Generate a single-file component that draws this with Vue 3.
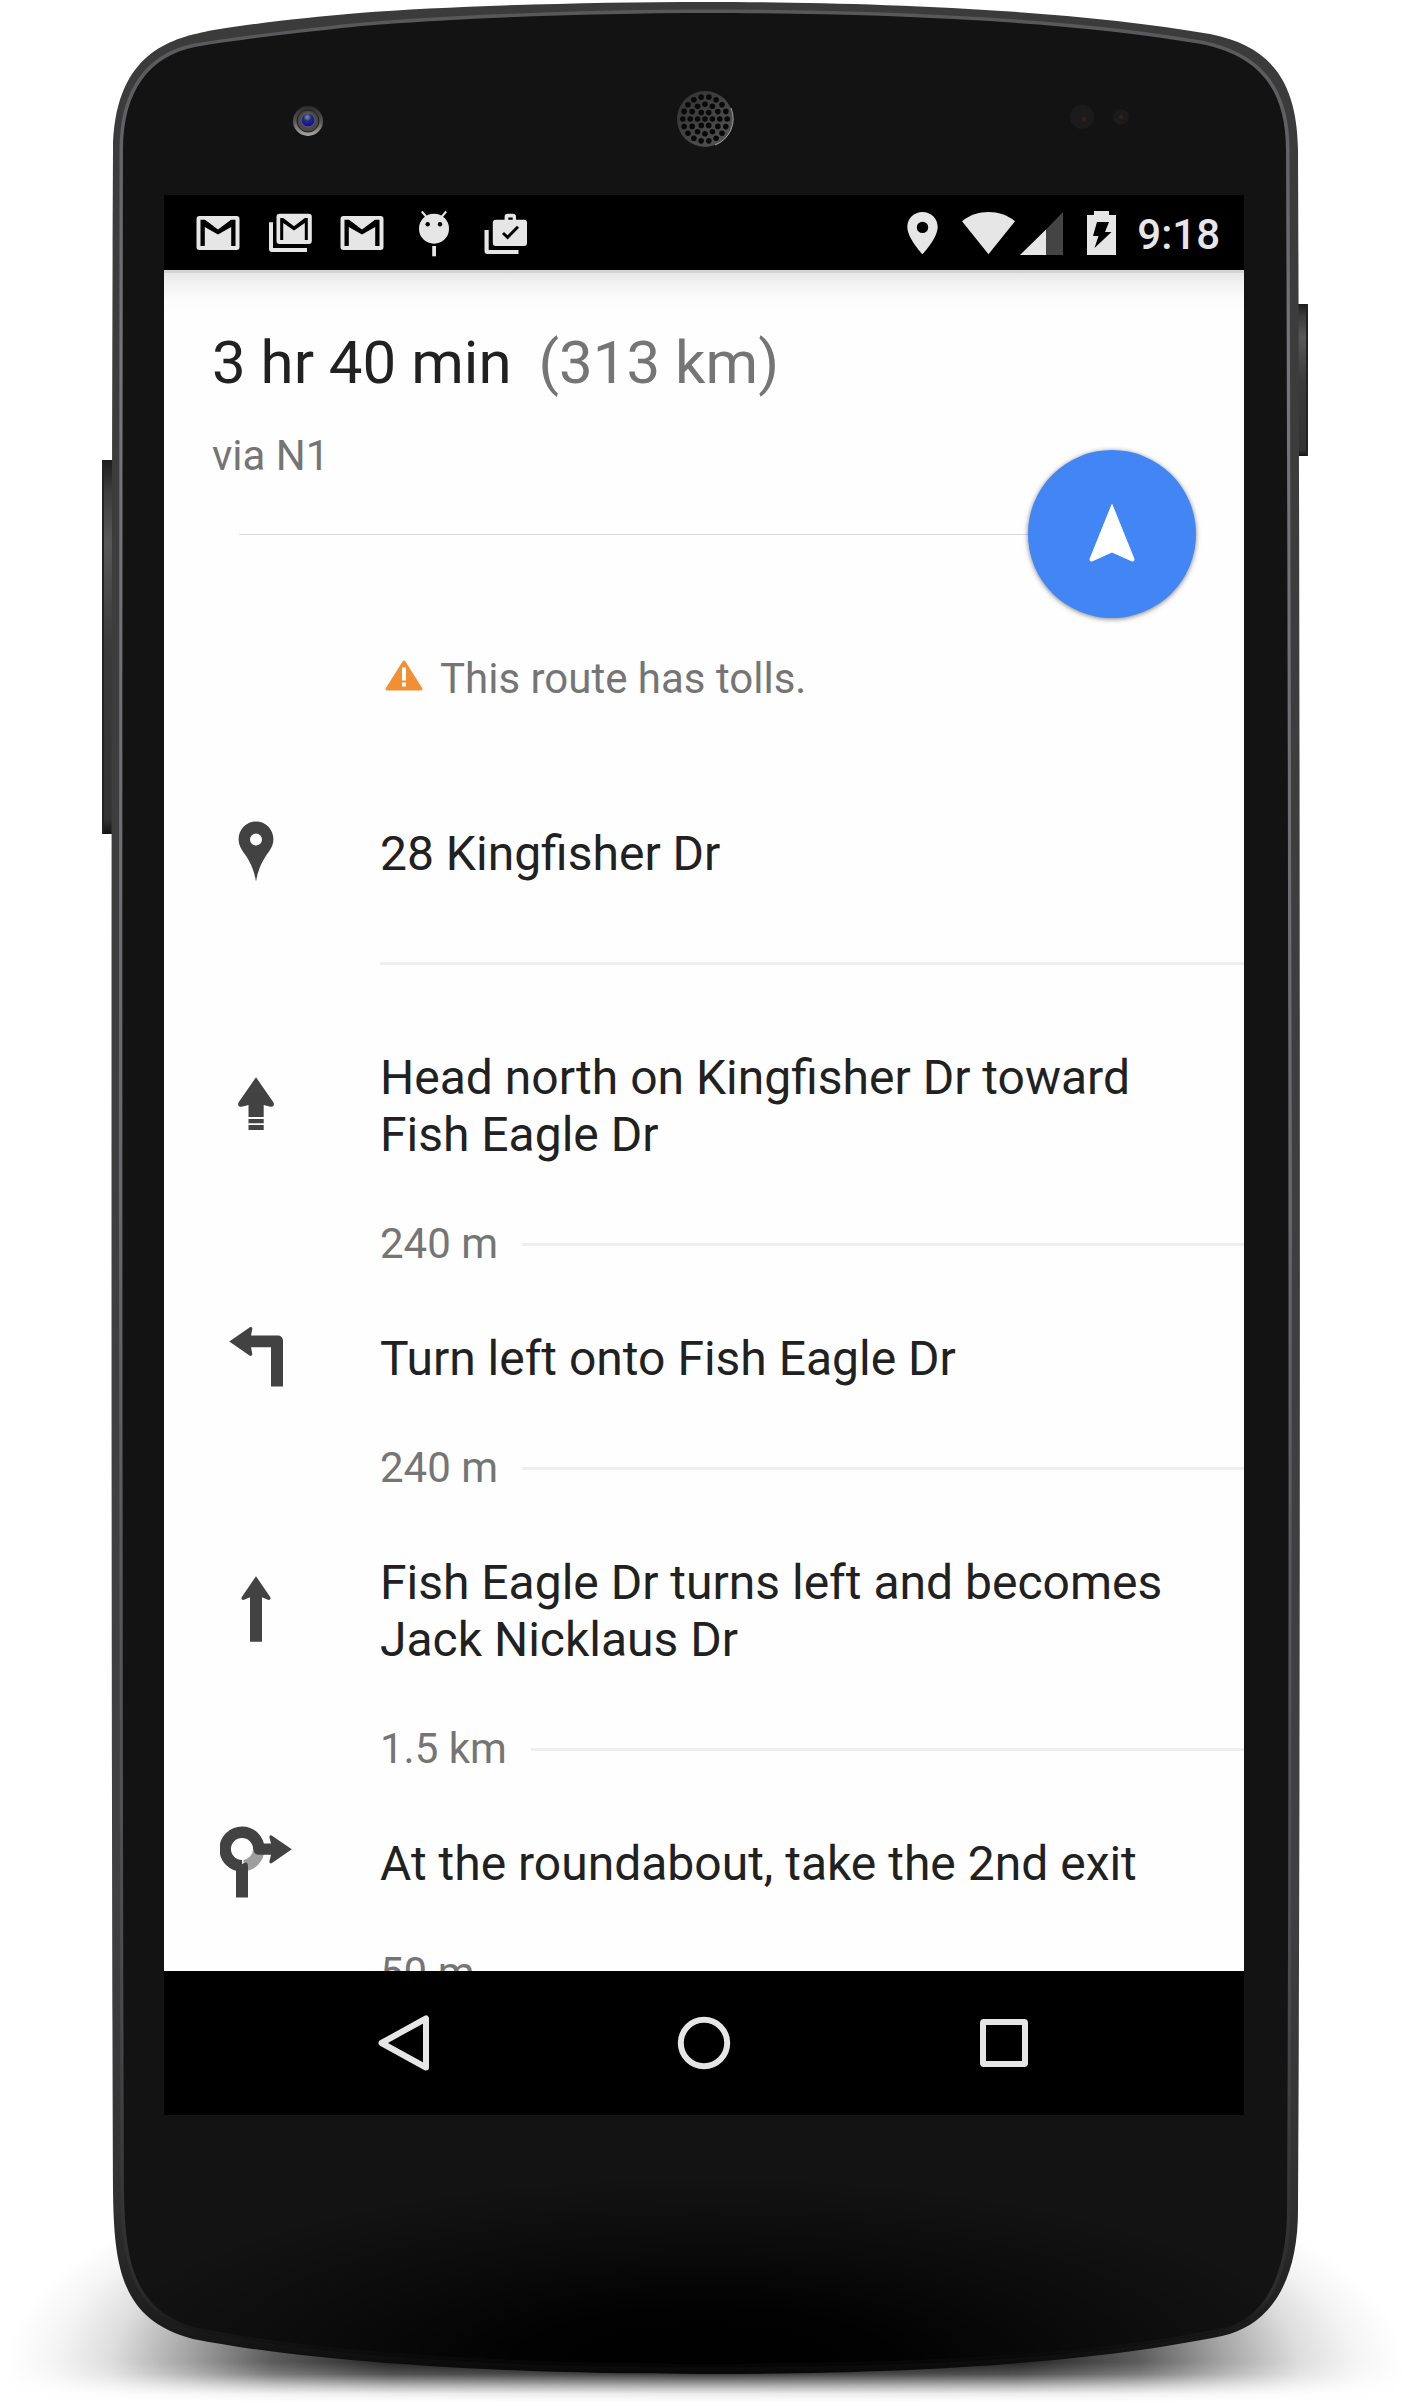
<script setup>
const summary = { duration: '3 hr 40 min', distance: '(313 km)', via: 'via N1' }

const steps = [
  { icon: 'pin', text: '28 Kingfisher Dr', distance: '' },
  { icon: 'depart', text: 'Head north on Kingfisher Dr toward Fish Eagle Dr', distance: '240 m' },
  { icon: 'left', text: 'Turn left onto Fish Eagle Dr', distance: '240 m' },
  { icon: 'straight', text: 'Fish Eagle Dr turns left and becomes Jack Nicklaus Dr', distance: '1.5 km' },
  { icon: 'roundabout', text: 'At the roundabout, take the 2nd exit', distance: '50 m' }
]

// Earpiece holes: a centre hole and three rings of 6, 12 and 18.
const holes = [{ x: 705, y: 119 }]
for (let ring = 1; ring <= 3; ring++) {
  for (let i = 0; i < ring * 6; i++) {
    const a = (i * Math.PI * 2) / (ring * 6)
    holes.push({ x: 705 + Math.cos(a) * ring * 7.4, y: 119 + Math.sin(a) * ring * 7.4 })
  }
}
</script>

<template>
  <main class="device">
    <svg class="frame" viewBox="0 0 1410 2406" preserveAspectRatio="none" aria-hidden="true">
      <defs>
        <linearGradient id="rim" x1="0" y1="0" x2="0" y2="1">
          <stop offset="0" stop-color="#3b3b3c" />
          <stop offset="0.8" stop-color="#404042" />
          <stop offset="0.93" stop-color="#303031" />
          <stop offset="0.98" stop-color="#1c1c1c" />
          <stop offset="1" stop-color="#080808" />
        </linearGradient>
        <linearGradient id="shine" x1="0" y1="0" x2="0" y2="1">
          <stop offset="0" stop-color="#58585b" />
          <stop offset="0.15" stop-color="#75757b" />
          <stop offset="0.5" stop-color="#68686d" />
          <stop offset="0.85" stop-color="#4a4a4d" />
          <stop offset="0.97" stop-color="#2b2b2b" />
          <stop offset="1" stop-color="#060606" />
        </linearGradient>
        <radialGradient id="shade" gradientUnits="userSpaceOnUse" cx="0" cy="0" r="1" gradientTransform="translate(705 2365) scale(620 190)">
          <stop offset="0" stop-color="#000" />
          <stop offset="0.3" stop-color="#000" stop-opacity="0.9" />
          <stop offset="0.65" stop-color="#000" stop-opacity="0.4" />
          <stop offset="1" stop-color="#000" stop-opacity="0" />
        </radialGradient>
        <radialGradient id="ground" gradientUnits="userSpaceOnUse" cx="0" cy="0" r="1" gradientTransform="translate(705 2370) scale(700 250)">
          <stop offset="0" stop-color="#000" stop-opacity="0.95" />
          <stop offset="0.45" stop-color="#000" stop-opacity="0.85" />
          <stop offset="0.62" stop-color="#000" stop-opacity="0.64" />
          <stop offset="0.74" stop-color="#000" stop-opacity="0.36" />
          <stop offset="0.85" stop-color="#000" stop-opacity="0.13" />
          <stop offset="0.93" stop-color="#000" stop-opacity="0.04" />
          <stop offset="1" stop-color="#000" stop-opacity="0" />
        </radialGradient>
        <linearGradient id="fall" gradientUnits="userSpaceOnUse" x1="0" y1="2362" x2="0" y2="2402">
          <stop offset="0" stop-color="#fff" />
          <stop offset="0.3" stop-color="#ccc" />
          <stop offset="0.6" stop-color="#555" />
          <stop offset="0.8" stop-color="#141414" />
          <stop offset="1" stop-color="#000" />
        </linearGradient>
        <mask id="fallMask" maskUnits="userSpaceOnUse" x="0" y="2100" width="1410" height="306">
          <rect y="2100" width="1410" height="306" fill="url(#fall)" />
        </mask>
        <linearGradient id="key" x1="0" y1="0" x2="0" y2="1">
          <stop offset="0" stop-color="#1c1c1c" />
          <stop offset="0.08" stop-color="#3c3c3c" />
          <stop offset="0.22" stop-color="#585858" />
          <stop offset="0.5" stop-color="#3a3a3a" />
          <stop offset="0.96" stop-color="#333" />
          <stop offset="1" stop-color="#141414" />
        </linearGradient>
        <linearGradient id="ringShade" x1="0" y1="0" x2="0" y2="1">
          <stop offset="0" stop-color="#2b2b2b" />
          <stop offset="0.5" stop-color="#555" />
          <stop offset="1" stop-color="#a8a8a8" />
        </linearGradient>
        <radialGradient id="lens" cx="0.45" cy="0.3" r="0.7">
          <stop offset="0" stop-color="#8695a5" />
          <stop offset="0.4" stop-color="#26306a" />
          <stop offset="0.75" stop-color="#1212b4" />
          <stop offset="1" stop-color="#10104a" />
        </radialGradient>
        <linearGradient id="mesh" x1="0" y1="0" x2="1" y2="1">
          <stop offset="0" stop-color="#303030" />
          <stop offset="1" stop-color="#565656" />
        </linearGradient>
      </defs>

      <rect y="2100" width="1410" height="306" fill="url(#ground)" mask="url(#fallMask)" />
      <rect x="102" y="460" width="14" height="374" rx="1" fill="url(#key)" />
      <rect x="102" y="460" width="2" height="374" fill="#222" />
      <rect x="1294" y="304" width="14" height="152" rx="1" fill="url(#key)" />
      <rect x="1306" y="304" width="2" height="152" fill="#222" />

      <path
        fill="url(#rim)"
        d="M705 2C590 2 450 6 359 13C300 18 240 25 204 32C165 40 114 58 113 150C111 600 111 1700 113 2190C114 2270 122 2320 193 2339C300 2360 480 2374 705 2374C930 2374 1100 2361 1222 2336C1275 2324 1298 2275 1298 2210C1301 1700 1300 600 1298 150C1297 80 1270 46 1210 34C1060 8 850 2 705 2Z"
      />
      <path
        class="panel"
        fill="#131313"
        stroke="url(#shine)"
        stroke-width="7"
        d="M705 13C590 13 430 19 342 28C280 35 235 40 195 47C150 56 123 90 123 150C122 600 122 1700 124 2190C125 2262 134 2312 198 2328C310 2350 480 2364 705 2364C930 2364 1100 2354 1227 2327C1270 2315 1287 2265 1287 2210C1290 1700 1288 600 1286 150C1286 85 1255 55 1201 44C1060 19 850 13 705 13Z"
      />
      <path
        fill="url(#shade)"
        d="M124 2115V2190C125 2262 134 2312 198 2328C310 2350 480 2364 705 2364C930 2364 1100 2354 1227 2327C1270 2315 1287 2265 1287 2210V2115Z"
      />

      <circle cx="308" cy="121" r="15" fill="url(#ringShade)" />
      <circle cx="308" cy="121" r="11" fill="#4a4745" stroke="#1c1c1c" stroke-width="1" />
      <circle cx="308" cy="120" r="7" fill="url(#lens)" stroke="#69645f" stroke-width="1" />

      <circle cx="705" cy="119" r="28" fill="url(#mesh)" />
      <path d="M715 145A28 28 0 0 0 731 108" fill="none" stroke="#a5a5a5" stroke-width="1" />
      <circle v-for="(h, i) in holes" :key="i" :cx="h.x" :cy="h.y" r="2.8" fill="#080808" />

      <circle cx="1082" cy="117" r="12" fill="#1b1b1b" />
      <circle cx="1084" cy="119" r="2" fill="#33241a" />
      <circle cx="1121" cy="117" r="8" fill="#1b1b1b" />
      <circle cx="1121" cy="117" r="2" fill="#33241a" />
    </svg>

    <section class="screen">
      <header class="status">
        <div class="notices">
          <svg viewBox="0 0 72 75" width="72" height="75" role="img" aria-label="Mail">
            <rect x="14.500" y="21" width="43" height="34" rx="3" />
            <path class="cut" d="M18.500 24.700H23L36 34.500 49 24.700H53.500V51H49.200V32L36 39.500 22.800 32V51H18.500Z" />
          </svg>
          <svg viewBox="0 0 72 75" width="72" height="75" role="img" aria-label="Mail, several accounts">
            <path d="M15 27.300h4V53h34v4H18a3 3 0 0 1-3-3Z" />
            <rect x="22.500" y="18.700" width="35.300" height="30.300" rx="3" />
            <path class="cut" d="M26.200 23h3L40 31.200 50.800 23h3V45h-3V28L40 35.500 29.200 28V45h-3Z" />
          </svg>
          <svg viewBox="0 0 72 75" width="72" height="75" role="img" aria-label="Mail">
            <rect x="14.500" y="21" width="43" height="34" rx="3" />
            <path class="cut" d="M18.500 24.700H23L36 34.500 49 24.700H53.500V51H49.200V32L36 39.500 22.800 32V51H18.500Z" />
          </svg>
          <svg viewBox="0 0 72 75" width="72" height="75" role="img" aria-label="Android">
            <circle cx="36" cy="33.700" r="15" />
            <path d="M23.800 16.500 28.500 22M48.200 16.500 43.500 22" stroke="#e6e6e6" stroke-width="2" />
            <circle class="cut" cx="29.700" cy="29.300" r="2.200" />
            <circle class="cut" cx="42" cy="29.300" r="2.200" />
            <rect x="34.200" y="51" width="3.800" height="10.300" />
          </svg>
          <svg viewBox="0 0 72 75" width="72" height="75" role="img" aria-label="App update">
            <path d="M14.500 35h4.200V55h29.800v4H17.500a3 3 0 0 1-3-3Z" />
            <path fill-rule="evenodd" d="M34.600 24.700V22a3.300 3.300 0 0 1 3.300-3.300h4.800A3.300 3.300 0 0 1 46 22v2.700h8a3 3 0 0 1 3 3V48a3 3 0 0 1-3 3H25.800a3 3 0 0 1-3-3V27.700a3 3 0 0 1 3-3ZM38.300 22.600v2.100h4.400v-2.100Z" />
            <path d="M33 38 37.600 42.300 48 31.700" fill="none" stroke="#000" stroke-width="3" />
          </svg>
        </div>
        <div class="system">
          <svg class="location" viewBox="0 0 31 44" width="31" height="44" role="img" aria-label="Location on">
            <path fill-rule="evenodd" d="M15.500 1C7 1 .3 7.600.3 16c0 11 15.200 27.300 15.200 27.300S30.700 27 30.700 16C30.700 7.600 24 1 15.500 1Zm0 9.700a5.700 5.700 0 1 1 0 11.400 5.700 5.700 0 0 1 0-11.400Z" />
          </svg>
          <svg class="wifi" viewBox="0 0 53 44" width="53" height="44" role="img" aria-label="Wi-Fi">
            <path d="M26.500 43.300 0 10.300C15 -2 38 -2 53 10.300Z" />
          </svg>
          <svg class="signal" viewBox="0 0 43 44" width="43" height="44" role="img" aria-label="Mobile signal">
            <path d="M43 1V44H25V19.400Z" fill="#444" />
            <path d="M0 44H26V18.400Z" />
          </svg>
          <svg class="battery" viewBox="0 0 29 44" width="29" height="44" role="img" aria-label="Battery charging">
            <path d="M7 0h15v4h7v40H0V4h7Z" />
            <path class="cut" d="M10 11H22L18 21H24.500L7.500 37 11.500 25H6Z" />
          </svg>
          <time>9:18</time>
        </div>
      </header>

      <article class="route">
        <header class="summary">
          <h1>{{ summary.duration }}<span>{{ summary.distance }}</span></h1>
          <p>{{ summary.via }}</p>
          <button class="start" type="button" aria-label="Start navigation">
            <svg viewBox="0 0 168 168" aria-hidden="true">
              <path d="M84 54.500 62 109Q61.500 111.500 64 111L84 102 104 111Q106.500 111.500 106 109Z" fill="#fff" stroke="#fff" stroke-linejoin="round" />
            </svg>
          </button>
        </header>

        <p class="notice">
          <svg viewBox="0 0 48 48" width="48" height="48" aria-hidden="true">
            <path d="M24 7 7 34H41Z" fill="#f28f34" stroke="#f28f34" stroke-width="3" stroke-linejoin="round" />
            <path d="M22 12.500h4v13h-4Zm0 15h4v4h-4Z" fill="#fff" />
          </svg>
          This route has tolls.
        </p>

        <ol class="steps">
          <li v-for="(step, i) in steps" :key="i" :class="['step', { origin: !step.distance, first: i === 1 }]">
            <div class="move">
              <svg viewBox="0 0 72 72" width="72" height="72" aria-hidden="true">
                <path v-if="step.icon === 'pin'" fill-rule="evenodd" d="M36 5.500C26.400 5.500 18.600 13.300 18.600 22.900c0 8 4.200 11.800 7.700 17.300C31.500 48.500 34 54.500 36 65.500c2-11 4.500-17 9.700-25.300 3.500-5.500 7.700-9.300 7.700-17.300C53.400 13.300 45.600 5.500 36 5.500Zm0 12a6 6 0 1 1 0 12 6 6 0 0 1 0-12Z" />
                <path v-else-if="step.icon === 'depart'" d="M36 9.300 53.500 34.500C54.500 37 53.500 39.500 50.500 38.700L43.700 37V49H28.500V37L21.500 38.700C18.500 39.500 17.500 37 18.500 34.500ZM28.500 51H43.700v4.300H28.500ZM28.500 57H43.700v5H28.500Z" />
                <path v-else-if="step.icon === 'left'" d="M9.300 20.500 29.500 6.500C31 5.500 32.600 6.500 32.300 8L31 14.500H58a5 5 0 0 1 5 5V65.500H51V26.300H31L32.300 33C32.600 34.500 31 35.500 29.500 34.500Z" />
                <path v-else-if="step.icon === 'straight'" d="M36 3.300 50.200 24C51 26 50 27.500 48 26.800L42 24.300V68.700H30V24.300L24 26.800C22 27.500 21 26 21.800 24Z" />
                <g v-else>
                  <path d="M38.800 24A16.800 16.800 0 0 1 24 39.600" fill="none" stroke="#9e9e9e" stroke-width="11.500" />
                  <path d="M22 39.800A16.800 16.800 0 1 1 38.800 23" fill="none" stroke="#424242" stroke-width="11.500" />
                  <path d="M16 38H22Q28 34 28 40V71.500H16Z" />
                  <path d="M33.300 17.500H51L49.500 11.500C49 9.500 50.500 8.500 52 9.700L71.800 23.300 52 37C50.500 38 49 37 49.500 35L51 28.700H38Q34 28.700 33.300 23Z" />
                </g>
              </svg>
              <p>{{ step.text }}</p>
            </div>
            <div class="leg">
              <span v-if="step.distance">{{ step.distance }}</span>
            </div>
          </li>
        </ol>
      </article>

      <nav class="keys" aria-label="System">
        <button type="button" aria-label="Back">
          <svg viewBox="0 0 60 60" width="60" height="60" aria-hidden="true"><path d="M52 5.500V54.500L7.500 30Z" /></svg>
        </button>
        <button type="button" aria-label="Home">
          <svg viewBox="0 0 60 60" width="60" height="60" aria-hidden="true"><circle cx="30" cy="30" r="23.200" /></svg>
        </button>
        <button type="button" aria-label="Recent apps">
          <svg viewBox="0 0 60 60" width="60" height="60" aria-hidden="true"><rect x="9" y="9" width="42" height="42" rx="1" /></svg>
        </button>
      </nav>
    </section>
  </main>
</template>

<style>
body {
  margin: 0;
  background: #fff;
}
</style>

<style scoped>
.device {
  position: relative;
  box-sizing: border-box;
  padding: 195px 166px 291px 164px;
  font-family: Roboto, "Noto Sans", sans-serif;
}

.frame {
  position: absolute;
  inset: 0;
  width: 100%;
  height: 100%;
}

.panel {
  paint-order: stroke;
}

.screen {
  position: relative;
  display: flex;
  flex-direction: column;
  aspect-ratio: 9 / 16;
  overflow: hidden;
  background: #fefefe;
  color: #212121;
}

svg {
  display: block;
}

h1,
p,
ol {
  margin: 0;
  padding: 0;
  font-weight: 400;
}

.status {
  display: flex;
  flex: none;
  justify-content: space-between;
  align-items: center;
  height: 75px;
  padding: 0 24px 0 18px;
  background: #000;
  color: #e6e6e6;
}

.status svg {
  fill: #e6e6e6;
}

.status .cut {
  fill: #000;
}

.notices,
.system {
  display: flex;
  align-items: center;
}

.location {
  margin-right: 24px;
}

.wifi {
  margin-right: 5px;
}

.signal {
  margin-right: 24px;
}

.battery {
  margin-right: 21px;
}

time {
  padding-top: 4px;
  font-size: 42px;
  font-weight: 500;
  line-height: 51px;
}

.route {
  flex: 1;
  min-height: 0;
  overflow: hidden;
  background:
    linear-gradient(#d4d4d4, #d4d4d4) 0 0 / 100% 3px no-repeat,
    linear-gradient(#e3e3e3, #f1f1f1 12px, #fbfbfb 28px, #fefefe 42px);
}

.summary {
  position: relative;
  padding: 58px 48px 54px;
}

.summary::after {
  content: "";
  position: absolute;
  left: 75px;
  right: 60px;
  bottom: 0;
  height: 1px;
  background: #dadada;
}

h1 {
  font-size: 60px;
  line-height: 70px;
}

h1 span {
  margin-left: 27px;
  color: #757575;
}

.summary p {
  margin-top: 32px;
  font-size: 42px;
  line-height: 51px;
  color: #757575;
}

.start {
  position: absolute;
  z-index: 1;
  right: 48px;
  bottom: -83px;
  width: 168px;
  height: 168px;
  padding: 0;
  border: 0;
  border-radius: 50%;
  background: #4285f4;
  box-shadow: 0 1px 5px rgba(0, 0, 0, 0.5);
}

.notice {
  display: flex;
  align-items: center;
  gap: 12px;
  margin-top: 118px;
  padding-left: 216px;
  font-size: 42px;
  line-height: 51px;
  color: #757575;
}

.steps {
  list-style: none;
}

.step {
  padding-top: 60px;
}

.step.first {
  padding-top: 84px;
}

.step.origin {
  padding-top: 121px;
}

.move {
  display: flex;
  align-items: center;
  min-height: 57px;
  padding-right: 48px;
}

.move svg {
  flex: none;
  margin: -10px 88px -6px 56px;
  fill: #424242;
}

.move p {
  font-size: 48px;
  line-height: 57px;
}

.leg {
  display: flex;
  align-items: center;
  gap: 24px;
  min-height: 51px;
  margin: 56px 0 0 216px;
  font-size: 42px;
  line-height: 49px;
  color: #757575;
}

.leg span {
  padding-bottom: 2px;
}

.leg::after {
  content: "";
  flex: 1;
  height: 3px;
  background: #eee;
}

.origin .leg {
  min-height: 3px;
  margin-top: 80px;
  margin-bottom: 24px;
}

.origin + .step.first {
  padding-top: 60px;
}

.keys {
  display: flex;
  flex: none;
  justify-content: center;
  height: 144px;
  background: #000;
}

.keys button {
  display: flex;
  flex: 0 1 300px;
  align-items: center;
  justify-content: center;
  padding: 0;
  border: 0;
  background: none;
}

.keys svg {
  fill: none;
  stroke: #e6e6e6;
  stroke-width: 6px;
  stroke-linejoin: round;
}
</style>
